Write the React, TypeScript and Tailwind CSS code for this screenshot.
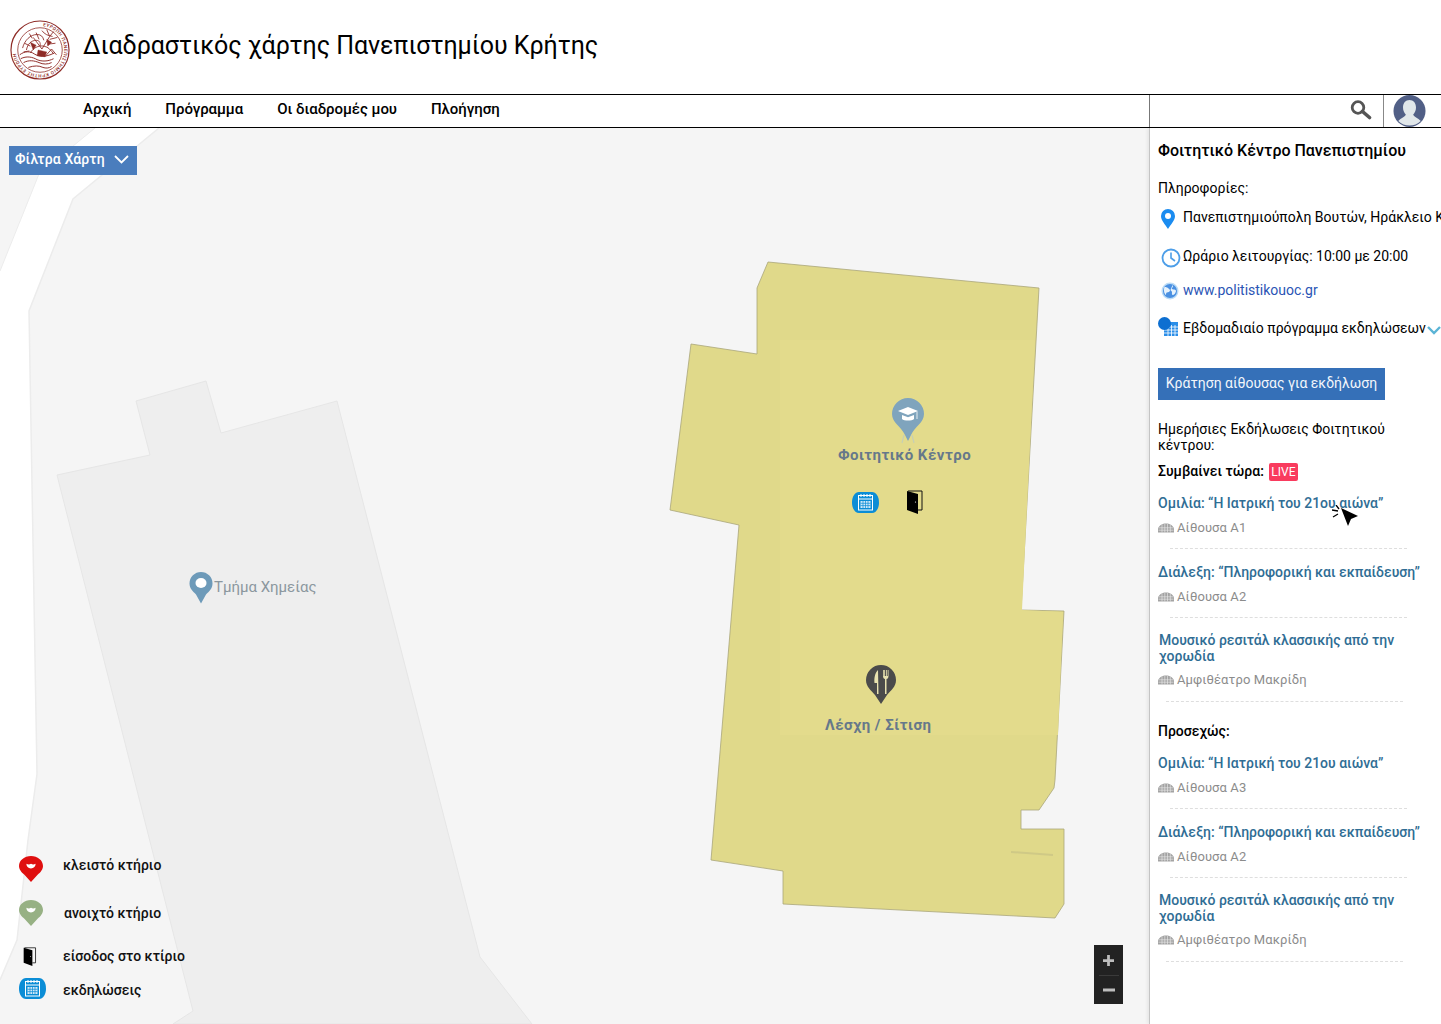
import React from 'react';

const NAV_LINKS = ['Αρχική', 'Πρόγραμμα', 'Οι διαδρομές μου', 'Πλοήγηση'];

const PIN = 'M12 0C5.4 0 0 5.1 0 11.4c0 4.4 2.6 7.2 5.4 10.2L12 30l6.6-8.4c2.8-3 5.4-5.8 5.4-10.2C24 5.1 18.6 0 12 0z';

function Logo() {
  return (
    <svg width="60" height="60" viewBox="0 0 62 62" fill="none" stroke="#8e2b26" className="mt-[6px] shrink-0">
      <circle cx="31" cy="31" r="30" strokeWidth="1.200" />
      <circle cx="31" cy="31" r="23" strokeWidth="0.800" />
      <path id="seal-ring" d="M31 6a25 25 0 1 1-.1 0" stroke="none" />
      <text fontSize="4.800" fill="#8e2b26" stroke="none" fontFamily="Roboto, sans-serif" fontWeight="500" letterSpacing="0.5">
        <textPath href="#seal-ring" startOffset="2%">ΕΥΡΩΠΗ ΠΑΝΕΠΙΣΤΗΜΙΟ ΚΡΗΤΗΣ ΕΥΡΩΠΗ</textPath>
      </text>
      <path d="M10 36c5-4 11-4 15-1 5 3 11 4 21-1M11 40c6-3 12-2 17 1 5 2 11 2 17-1M14 44c6-3 11-2 16 0 4 2 9 2 13 0M19 49c6-2 11-2 15 0 3 1 6 1 9-1" strokeWidth="1" />
      <path d="M13 29c2-8 8-14 15-14 4 0 6 2 7 6M17 31c1-6 5-10 10-10 3 0 5 2 4 6M21 34c3-5 8-8 14-7 5 1 7 4 10 8M24 18l9 12 8-13M27 13l3 7M33 11c3 4 6 5 11 6M38 10l3 7M45 12l-4 5M49 18l-8 2M47 24l-8 1M36 38l7-8 5 6M15 24l6 3M14 33l6-1M20 14l3 5" strokeWidth="0.900" />
      <path d="M21 23l6 3-3 5zM29 31l9 2-2 5-8-1zM38 20l5 3-4 4z" fill="#8e2b26" strokeWidth="0.400" />
    </svg>
  );
}

function CalendarBadge() {
  return (
    <svg width="27" height="21" viewBox="0 0 27 21" className="block">
      <path d="M7 0h13c4 0 7 4.500 7 10.500S24 21 20 21H7c-4 0-7-4.500-7-10.500S3 0 7 0z" fill="#0b8dd6" />
      <rect x="6.500" y="3.500" width="14" height="14.500" fill="none" stroke="#fff" strokeWidth="1" />
      <path d="M6.500 7h14M9 2v3M12 2v3M15 2v3M18 2v3" stroke="#fff" strokeWidth="1" />
      <path d="M8.500 9h10v7h-10z" fill="#cfe9f8" />
      <path d="M11 9v7M13.500 9v7M16 9v7M8.500 11.300h10M8.500 13.600h10" stroke="#0b8dd6" strokeWidth="0.700" />
    </svg>
  );
}

function DoorIcon({ small }: { small?: boolean }) {
  return (
    <svg width={small ? 14 : 16} height={small ? 19 : 24} viewBox="0 0 16 24" className="block">
      <path d="M1 1h14v19H11" fill="none" stroke="#111" strokeWidth="1" />
      <path d="M0 1l11 3v20L0 20z" fill="#000" />
      <circle cx="8.500" cy="12" r="0.600" fill="#fff" />
    </svg>
  );
}

function HeartPin({ color }: { color: string }) {
  return (
    <svg width="24" height="26" viewBox="0 0 24 30" className="block" preserveAspectRatio="none">
      <path d={PIN} fill={color} />
      <path d="M7.500 9c1.500 1 3 1 4.500 0 1.500 1 3 1 4.500 0 .3 2.800-1.800 5-4.500 5.500C9.300 14 7.200 11.800 7.500 9z" fill="#fff" />
    </svg>
  );
}

function SeatIcon() {
  return (
    <svg width="16" height="10" viewBox="0 0 16 10" className="shrink-0">
      <path d="M0 6C1 2 4.500 .5 8 .5S15 2 16 6v3.500H0z" fill="#a3a3a3" />
      <path d="M1 4.800h14M.5 7.200h15M4 1.500v8M6.800 1v8.500M9.500 1v8.500M12.300 1.500v8" stroke="#eee" strokeWidth="0.600" />
    </svg>
  );
}

function EventItem({ title, room, shifted }: { title: React.ReactNode; room: string; shifted?: boolean }) {
  return (
    <div className={shifted ? 'mt-px' : ''}>
      <div className={`flex min-h-5 items-center text-[14px] leading-4 font-medium text-[#2f6d94] ${shifted ? 'pl-px' : ''}`}>
        {title}
      </div>
      <div className={`flex h-5 items-center gap-[3px] text-[13px] tracking-[0.1px] text-[#8c8c8c] ${shifted ? 'mt-[6px]' : 'mt-[5px]'}`}>
        <SeatIcon />
        <span>{room}</span>
      </div>
      <div className={`h-px w-[237px] border-t border-dashed border-[#dedede] ${shifted ? 'mt-[11px] ml-2' : 'mt-[10px] ml-3'}`} />
    </div>
  );
}

function MapLayer() {
  return (
    <svg viewBox="0 128 1149 896" width="1149" height="896" className="absolute inset-0">
      <polygon points="0,271 39,174 95,128 159,128 73,199 29,311 37,774 28,840 17,940 0,980" fill="#fff" />
      <polyline points="159,128 73,199 29,311 37,774 28,840 17,940 0,980" fill="none" stroke="#ececec" strokeWidth="1.500" />
      <polyline points="0,271 39,174 95,128" fill="none" stroke="#ececec" strokeWidth="1" />
      <polygon
        points="57,475 150,455 136,401 206,381 221,433 337,401 480,957 532,1024 173,1024 193,1011"
        fill="#eeeeee"
        stroke="#e6e6e6"
      />
      <polygon
        points="768,262 1039,288 1021,610 1064,611 1055,780 1054,788 1039,810 1021,810 1021,829 1064,829 1064,904 1055,918 783,904 783,871 711,860 739,525 670,510 691,344 757,354 757,288"
        fill="#e0d98a"
        stroke="#aaa67a"
        strokeWidth="0.800"
      />
      <polygon points="780,340 1035,340 1022,610 1063,612 1058,735 780,735" fill="#e3db8c" />
      <line x1="1011" y1="852" x2="1053" y2="855" stroke="#cfc986" strokeWidth="2" />
    </svg>
  );
}

export default function App() {
  return (
    <div className="flex h-[1024px] w-full flex-col overflow-hidden bg-white font-['Roboto',sans-serif] text-black">
      {/* Header */}
      <header className="flex h-[95px] items-center gap-[13px] border-b border-black pl-[10px]">
        <Logo />
        <h1 className="-mt-[2px] text-[25px] font-normal tracking-[-0.05px]">Διαδραστικός χάρτης Πανεπιστημίου Κρήτης</h1>
      </header>

      {/* Nav */}
      <nav className="flex h-[33px] border-b border-black">
        <div className="-mt-[4px] flex flex-1 items-center gap-[34px] pl-[83px] text-[15px] font-medium tracking-[-0.05px]">
          {NAV_LINKS.map((link) => (
            <a key={link}>{link}</a>
          ))}
        </div>
        <div className="flex w-[292px] border-l border-[#777]">
          <div className="flex w-[234px] items-center justify-end border-r border-[#888] pr-[11px]">
            <svg width="22" height="20" viewBox="0 0 22 20" fill="none" stroke="#555" className="-mt-[2px]">
              <circle cx="8" cy="7.500" r="5.800" strokeWidth="2.800" />
              <path d="M12.500 11.500l7 6" strokeWidth="3.600" strokeLinecap="round" />
            </svg>
          </div>
          <div className="flex flex-1 items-center pl-[9px]">
            <svg width="33" height="32" viewBox="0 0 33 32">
              <circle cx="16.500" cy="16" r="16" fill="#515f86" />
              <path d="M16.500 5c4 0 6.500 3 6.500 7.500 0 3-1.300 5.500-2.800 7 .3 2 5 3.500 7.500 6.500a16 16 0 0 1-22.400 0c2.500-3 7.200-4.500 7.500-6.500-1.500-1.500-2.800-4-2.800-7C10 8 12.500 5 16.500 5z" fill="#e1e7ea" />
            </svg>
          </div>
        </div>
      </nav>

      <main className="flex min-h-0 flex-1">
        {/* Map */}
        <section className="relative w-[1149px] overflow-hidden bg-[#f5f5f5]">
          <MapLayer />

          <button className="absolute left-[9px] top-[18px] flex h-[29px] w-[128px] items-center gap-[9px] bg-[#4a7dbd] pb-[2px] pl-[6px] text-[14px] font-medium tracking-[0.15px] text-white">
            Φίλτρα Χάρτη
            <svg width="15" height="9" viewBox="0 0 15 9" fill="none" stroke="#fff" strokeWidth="1.800">
              <path d="M1 1l6.500 6.500L14 1" />
            </svg>
          </button>

          {/* Student centre */}
          <svg width="32" height="46" viewBox="0 0 32 46" className="absolute left-[892px] top-[270px]">
            <path d="M16 0a16 16 0 0 1 16 16c0 9-9 12-13 21l-3 6-3-6C9 28 0 25 0 16A16 16 0 0 1 16 0z" fill="#7fa4bd" />
            <path d="M12 37l-2 8M20 37l2 8" stroke="#c7cfb5" strokeWidth="1.200" />
            <path d="M6 13l10-4 10 4-10 4z" fill="#fff" />
            <path d="M10 17v4c2 2 10 2 12 0v-4l-6 2.300z" fill="#fff" />
            <path d="M25 13.500V21" stroke="#fff" strokeWidth="0.800" />
          </svg>
          <span className="absolute left-[838px] top-[317px] text-[15px] leading-5 font-bold tracking-[0.5px] text-[#66788a]">
            Φοιτητικό Κέντρο
          </span>
          <div className="absolute left-[852px] top-[364px]">
            <CalendarBadge />
          </div>
          <div className="absolute left-[907px] top-[362px]">
            <DoorIcon />
          </div>

          {/* Canteen */}
          <svg width="30" height="39" viewBox="0 0 30 39" className="absolute left-[866px] top-[537px]">
            <path d="M15 0a15 15 0 0 1 15 15c0 7-5 10-9 15l-6 9-6-9C5 25 0 22 0 15A15 15 0 0 1 15 0z" fill="#4b4b4b" />
            <path d="M12 5c-3 3-4 8-3.500 13H11v11h1.500z" fill="#e8e2b0" />
            <path d="M17 5v6c0 2 1 3 2 3v15h1.500V14c1 0 2-1 2-3V5h-.8v6h-.9V5H20v6h-.9V5h-.9v6h-.4V5z" fill="#e8e2b0" />
          </svg>
          <span className="absolute left-[825px] top-[587px] text-[15px] leading-5 font-bold tracking-[0.5px] text-[#66788a]">
            Λέσχη / Σίτιση
          </span>

          {/* Chemistry */}
          <svg width="24" height="32" viewBox="0 0 24 32" className="absolute left-[189px] top-[444px]">
            <path d="M12 0a11.500 11.500 0 0 1 11.500 11.500c0 5-3.500 8-6.500 11l-5 9-5-9c-3-3-6.500-6-6.500-11A11.500 11.500 0 0 1 12 0z" fill="#6d9ab9" />
            <ellipse cx="12" cy="11" rx="5.500" ry="5" fill="#fff" />
          </svg>
          <span className="absolute left-[214px] top-[449px] text-[15px] leading-5 text-[#8b979e]">
            Τμήμα Χημείας
          </span>

          {/* Legend */}
          <div className="absolute left-[19px] top-[728px] w-[190px] text-[14px] font-medium text-[#111]">
            <div className="flex h-[26px] items-center">
              <span className="w-11 shrink-0"><HeartPin color="#df0f0f" /></span>
              <span className="-mt-[8px]">κλειστό κτήριο</span>
            </div>
            <div className="mt-[18px] flex h-[26px] items-center">
              <span className="w-[45px] shrink-0"><HeartPin color="#97b184" /></span>
              <span className="mt-[1px]">ανοιχτό κτήριο</span>
            </div>
            <div className="mt-[20px] flex h-5 items-center">
              <span className="w-11 shrink-0 pl-[4px]"><DoorIcon small /></span>
              <span>είσοδος στο κτίριο</span>
            </div>
            <div className="mt-[12px] flex h-[21px] items-center">
              <span className="w-11 shrink-0"><CalendarBadge /></span>
              <span className="mt-[3px]">εκδηλώσεις</span>
            </div>
          </div>

          {/* Zoom control */}
          <div className="absolute left-[1094px] top-[817px] flex h-[59px] w-[29px] flex-col items-center bg-[#222]">
            <div className="flex h-[30px] w-full items-center justify-center">
              <svg width="11" height="11" viewBox="0 0 12 12"><path d="M6 0v12M0 6h12" stroke="#bdbdbd" strokeWidth="3" /></svg>
            </div>
            <div className="h-px w-5 bg-[#3a3a3a]" />
            <div className="flex flex-1 items-center justify-center">
              <svg width="12" height="4" viewBox="0 0 12 4"><path d="M0 2h12" stroke="#bdbdbd" strokeWidth="3" /></svg>
            </div>
          </div>
        </section>

        {/* Sidebar */}
        <aside className="relative w-[292px] overflow-hidden border-l border-[#c4c4c4] pl-2 pt-[11px] shadow-[-2px_0_3px_rgba(0,0,0,0.06)]">
          <h2 className="flex h-6 items-center whitespace-nowrap text-[16px] font-medium">
            Φοιτητικό Κέντρο Πανεπιστημίου
          </h2>
          <p className="mt-[15px] h-5 text-[14px] leading-5">Πληροφορίες:</p>

          <div className="mt-[9px] flex h-5 items-center whitespace-nowrap text-[14px]">
            <span className="w-[25px] shrink-0 pl-[3px]">
              <svg width="14" height="20" viewBox="0 0 14 20" className="mt-[4px]">
                <path d="M7 0a7 7 0 0 1 7 7c0 4.500-4 8-7 13C4 15 0 11.500 0 7a7 7 0 0 1 7-7z" fill="#1b8cf0" />
                <circle cx="7" cy="7" r="3" fill="#fff" />
              </svg>
            </span>
            Πανεπιστημιούπολη Βουτών, Ηράκλειο Κρήτης
          </div>

          <div className="mt-[19px] flex h-5 items-center whitespace-nowrap text-[14px]">
            <span className="w-[25px] shrink-0 pl-[3px]">
              <svg width="20" height="20" viewBox="0 0 20 20" fill="none" className="mt-[3px]">
                <circle cx="10" cy="10" r="8.500" stroke="#4d9ee8" strokeWidth="1.800" />
                <path d="M10 4.500V10l4 3" stroke="#4d9ee8" strokeWidth="1.600" />
              </svg>
            </span>
            Ωράριο λειτουργίας: 10:00 με 20:00
          </div>

          <div className="mt-[14px] flex h-5 items-center whitespace-nowrap text-[14px] text-[#2a55b5]">
            <span className="w-[25px] shrink-0 pl-[3px]">
              <svg width="18" height="18" viewBox="0 0 18 18" className="mt-[1px]">
                <circle cx="9" cy="9" r="8.500" fill="#bcdcf6" />
                <circle cx="9" cy="9" r="7" fill="#4a90e2" />
                <path d="M3.500 5c2 0 3 .5 4 1.500s1.500 1 1.500 2-2 2-3 2-1 2-1 2.500S3 11 3 9s0-3 .5-4zM11.500 3c1 1.500 0 2.500-.5 3s0 1.500 1.500 1.500 2.500.5 2.500 1.500-1.500 4-3 4-1-2-1-3-1.500-1-1.500-2" fill="#e6f2fc" />
              </svg>
            </span>
            www.politistikouoc.gr
          </div>

          <div className="relative mt-[18px] flex h-5 items-center whitespace-nowrap text-[14px]">
            <span className="w-[25px] shrink-0">
              <svg width="20" height="19" viewBox="0 0 20 19" className="-mt-[4px]">
                <rect x="6" y="5" width="14" height="14" fill="#2a8ee8" />
                <path d="M6 10h14M6 13h14M6 16h14M10 8v11M13.500 8v11M17 8v11" stroke="#fff" strokeWidth="0.800" />
                <circle cx="6.500" cy="6.500" r="6.500" fill="#0d6fd1" />
              </svg>
            </span>
            Εβδομαδιαίο πρόγραμμα εκδηλώσεων
            <svg width="14" height="9" viewBox="0 0 14 9" fill="none" stroke="#5bb4d6" strokeWidth="2.400" className="ml-[1px] mt-[4px] shrink-0">
              <path d="M1 1l6 6 6-6" />
            </svg>
          </div>

          <button className="mt-[30px] block h-8 w-[227px] bg-[#3570b8] pb-[2px] text-center text-[14px] text-[#f2f6fb]">
            Κράτηση αίθουσας για εκδήλωση
          </button>

          <p className="mt-[21px] w-[270px] text-[14px] leading-4">
            Ημερήσιες Εκδήλωσεις Φοιτητικού κέντρου:
          </p>

          <div className="mt-2 flex h-5 items-center gap-[5px] text-[14px] font-medium">
            Συμβαίνει τώρα:
            <span className="mt-[2px] flex h-[18px] w-[29px] items-center justify-center rounded-[2px] bg-[#f93b5e] text-[12px] font-normal text-white">
              LIVE
            </span>
          </div>

          <div className="mt-3 flex flex-col gap-[13px]">
            <EventItem title="Ομιλία: “Η Ιατρική του 21ου αιώνα”" room="Αίθουσα Α1" />
            <EventItem title="Διάλεξη: “Πληροφορική και εκπαίδευση”" room="Αίθουσα Α2" />
            <EventItem shifted title={<span className="block w-[260px]">Μουσικό ρεσιτάλ κλασσικής από την χορωδία</span>} room="Αμφιθέατρο Μακρίδη" />
          </div>

          <p className="mt-[19px] h-5 text-[14px] leading-5 font-medium">Προσεχώς:</p>

          <div className="mt-3 flex flex-col gap-[13px]">
            <EventItem title="Ομιλία: “Η Ιατρική του 21ου αιώνα”" room="Αίθουσα Α3" />
            <EventItem title="Διάλεξη: “Πληροφορική και εκπαίδευση”" room="Αίθουσα Α2" />
            <EventItem shifted title={<span className="block w-[260px]">Μουσικό ρεσιτάλ κλασσικής από την χορωδία</span>} room="Αμφιθέατρο Μακρίδη" />
          </div>

          {/* Mouse pointer */}
          <svg width="28" height="24" viewBox="0 0 28 24" className="absolute left-[182px] top-[377px]">
            <path d="M9 3l7 18 3-7 7-3z" fill="#000" />
            <path d="M0 5l6 1M4 0l3 4M1 12l5-3" stroke="#000" strokeWidth="1.300" />
          </svg>
        </aside>
      </main>
    </div>
  );
}
